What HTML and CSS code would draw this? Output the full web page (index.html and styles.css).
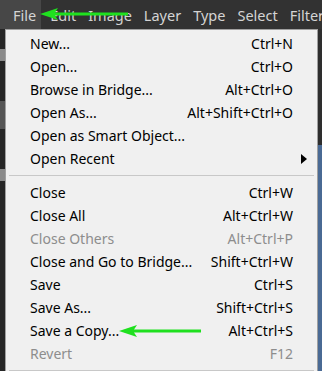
FILE: index.html
```html
<!DOCTYPE html>
<html lang="en">
<head>
    <meta charset="UTF-8">
    <meta name="viewport" content="width=device-width, initial-scale=1.0">
    <title>File menu</title>
    <link rel="stylesheet" href="styles.css">
</head>
<body>

    <div class="app">
        <!-- Barra dei menu -->
        <div class="menubar">
            <span class="menubar-item active">File</span>
            <span class="menubar-item">Edit</span>
            <span class="menubar-item">Image</span>
            <span class="menubar-item">Layer</span>
            <span class="menubar-item">Type</span>
            <span class="menubar-item">Select</span>
            <span class="menubar-item">Filter</span>
        </div>

        <div class="workspace">
            <div class="toolstrip">
                <div class="tool tool-a"></div>
                <div class="tool tool-b"></div>
                <div class="tool tool-c"></div>
            </div>

            <!-- Menu a tendina File -->
            <div class="menu">
                <div class="row"><span>New...</span><span class="key">Ctrl+N</span></div>
                <div class="row"><span>Open...</span><span class="key">Ctrl+O</span></div>
                <div class="row"><span>Browse in Bridge...</span><span class="key">Alt+Ctrl+O</span></div>
                <div class="row"><span>Open As...</span><span class="key">Alt+Shift+Ctrl+O</span></div>
                <div class="row"><span>Open as Smart Object...</span><span class="key"></span></div>
                <div class="row"><span>Open Recent</span><span class="submenu"></span></div>
                <div class="sep"></div>
                <div class="row"><span>Close</span><span class="key">Ctrl+W</span></div>
                <div class="row"><span>Close All</span><span class="key">Alt+Ctrl+W</span></div>
                <div class="row disabled"><span>Close Others</span><span class="key">Alt+Ctrl+P</span></div>
                <div class="row"><span>Close and Go to Bridge...</span><span class="key">Shift+Ctrl+W</span></div>
                <div class="row"><span>Save</span><span class="key">Ctrl+S</span></div>
                <div class="row"><span>Save As...</span><span class="key">Shift+Ctrl+S</span></div>
                <div class="row"><span>Save a Copy...</span><span class="key">Alt+Ctrl+S</span></div>
                <div class="row disabled"><span>Revert</span><span class="key">F12</span></div>
                <div class="sep"></div>
            </div>

            <div class="rightstrip"></div>
        </div>

        <!-- Frecce verdi -->
        <svg class="arrow arrow-top" width="100" height="16" viewBox="0 0 100 16">
            <polygon points="0,8 18,2 15,6.5 88,6.5 88,9.5 15,9.5 18,14" fill="#1fe01f"/>
        </svg>
        <svg class="arrow arrow-copy" width="90" height="16" viewBox="0 0 90 16">
            <polygon points="0,8 18,2 15,6.5 82,6.5 82,9.5 15,9.5 18,14" fill="#1fe01f"/>
        </svg>
    </div>

</body>
</html>
```

FILE: styles.css
```css
body {
    margin: 0;
    padding: 0;
    background-color: #2b2b2b;
    font-family: 'Noto Sans', 'Open Sans', sans-serif;
    overflow: hidden;
}

.app {
    position: relative;
    width: 322px;
    height: 371px;
    overflow: hidden;
}

.menubar {
    display: flex;
    height: 29px;
    align-items: stretch;
    background-color: #323232;
    color: #d4d4d4;
    font-size: 14.5px;
    white-space: nowrap;
    overflow: hidden;
}

.menubar-item {
    display: flex;
    align-items: center;
    padding: 0 6px;
}

.menubar-item.active {
    background-color: #474747;
    padding: 0 5px 0 13px;
    margin-right: 3px;
}

.workspace {
    display: flex;
    height: 342px;
}

.toolstrip {
    width: 5px;
    background-color: #262626;
    display: flex;
    flex-direction: column;
    padding-top: 20px;
    gap: 40px;
}

.tool {
    height: 12px;
    background-color: #8a8a8a;
}

.tool-b {
    background-color: #555;
    height: 28px;
}

.menu {
    flex: 1;
    background-color: #f0f0f0;
    border: 1px solid #a0a0a0;
    border-bottom: none;
    padding-top: 2px;
    font-size: 14px;
    color: #000;
}

.row {
    display: flex;
    justify-content: space-between;
    align-items: center;
    height: 23px;
    padding: 0 24px;
    white-space: nowrap;
}

.row.disabled {
    color: #8d8d8d;
}

.submenu {
    width: 0;
    height: 0;
    border-top: 5px solid transparent;
    border-bottom: 5px solid transparent;
    border-left: 6px solid #000;
    margin-right: -14px;
}

.sep {
    height: 1px;
    background-color: #c8c8c8;
    margin: 5px 3px;
}

.rightstrip {
    width: 4px;
    background: linear-gradient(#2e2e2e 0, #2e2e2e 116px, #4a6a94 116px);
}

.arrow {
    position: absolute;
}

.arrow-top {
    left: 40px;
    top: 6px;
}

.arrow-copy {
    left: 119px;
    top: 323px;
}
```
